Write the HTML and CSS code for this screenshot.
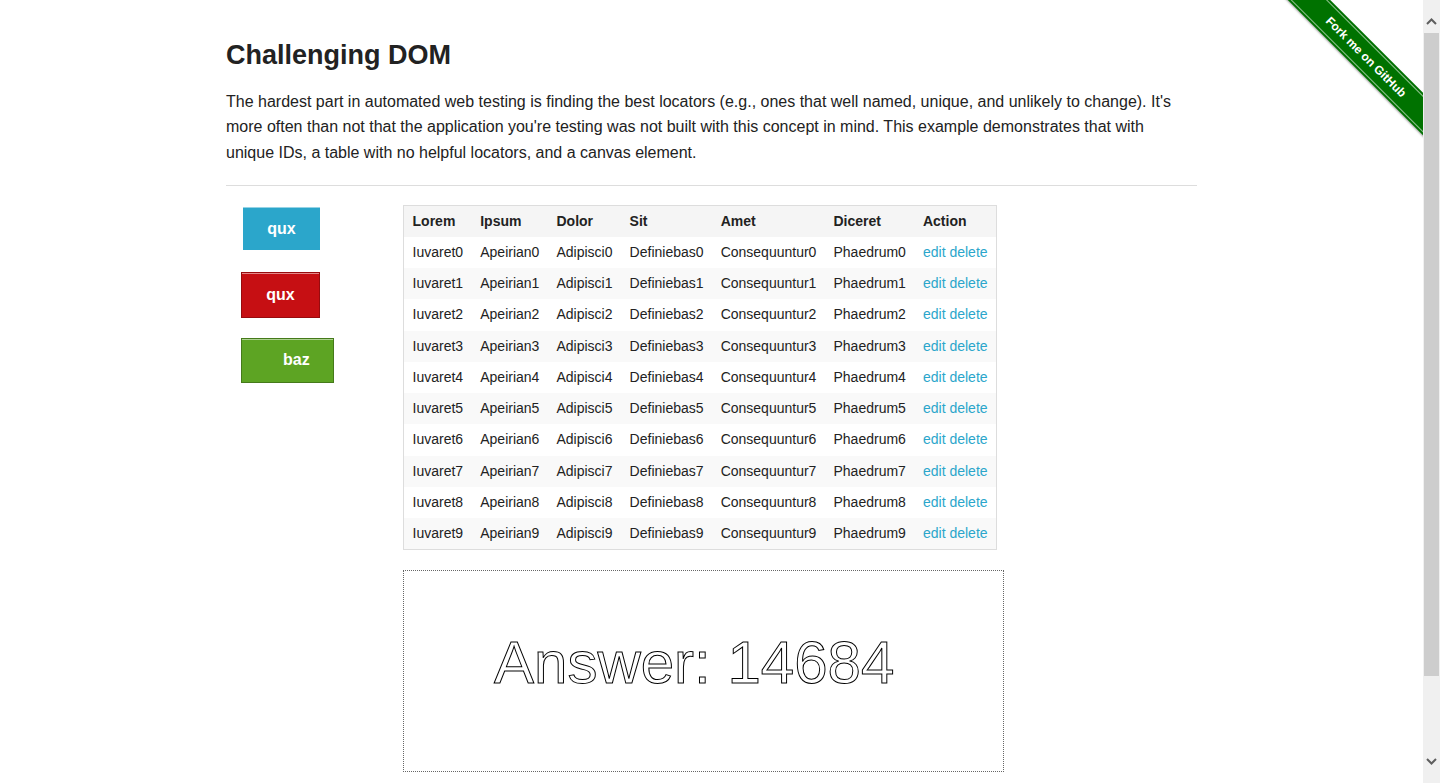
FILE: index.html
```html
<!DOCTYPE html>
<html lang="en">
<head>
<meta charset="utf-8">
<title>The Internet</title>
<link rel="stylesheet" href="styles.css">
</head>
<body>
<div class="fork">
  <a class="fork-band" href="#"><span>Fork me on GitHub</span></a>
</div>
<div class="scrollbar" aria-hidden="true">
  <svg class="sb-up" width="11" height="7" viewBox="0 0 11 7"><polyline points="1,6 5.5,1.5 10,6" fill="none" stroke="#5f5f5f" stroke-width="2"/></svg>
  <div class="sb-thumb"></div>
  <svg class="sb-down" width="11" height="7" viewBox="0 0 11 7"><polyline points="1,1 5.5,5.5 10,1" fill="none" stroke="#5f5f5f" stroke-width="2"/></svg>
</div>
<div class="page">
  <div class="example">
    <h3 class="title">Challenging DOM</h3>
    <p class="intro">The hardest part in automated web testing is finding the best locators (e.g., ones that well named, unique, and unlikely to change). It's more often than not that the application you're testing was not built with this concept in mind. This example demonstrates that with unique IDs, a table with no helpful locators, and a canvas element.</p>
    <hr class="rule">
    <div class="work">
      <div class="buttons">
        <a href="#" class="btn btn-blue">qux</a>
        <a href="#" class="btn btn-red">qux</a>
        <a href="#" class="btn btn-green">baz</a>
      </div>
      <div class="main">
        <table class="grid">
          <thead>
            <tr><th>Lorem</th><th>Ipsum</th><th>Dolor</th><th>Sit</th><th>Amet</th><th>Diceret</th><th>Action</th></tr>
          </thead>
          <tbody>
            <tr><td>Iuvaret0</td><td>Apeirian0</td><td>Adipisci0</td><td>Definiebas0</td><td>Consequuntur0</td><td>Phaedrum0</td><td><a href="#">edit</a> <a href="#">delete</a></td></tr>
            <tr><td>Iuvaret1</td><td>Apeirian1</td><td>Adipisci1</td><td>Definiebas1</td><td>Consequuntur1</td><td>Phaedrum1</td><td><a href="#">edit</a> <a href="#">delete</a></td></tr>
            <tr><td>Iuvaret2</td><td>Apeirian2</td><td>Adipisci2</td><td>Definiebas2</td><td>Consequuntur2</td><td>Phaedrum2</td><td><a href="#">edit</a> <a href="#">delete</a></td></tr>
            <tr><td>Iuvaret3</td><td>Apeirian3</td><td>Adipisci3</td><td>Definiebas3</td><td>Consequuntur3</td><td>Phaedrum3</td><td><a href="#">edit</a> <a href="#">delete</a></td></tr>
            <tr><td>Iuvaret4</td><td>Apeirian4</td><td>Adipisci4</td><td>Definiebas4</td><td>Consequuntur4</td><td>Phaedrum4</td><td><a href="#">edit</a> <a href="#">delete</a></td></tr>
            <tr><td>Iuvaret5</td><td>Apeirian5</td><td>Adipisci5</td><td>Definiebas5</td><td>Consequuntur5</td><td>Phaedrum5</td><td><a href="#">edit</a> <a href="#">delete</a></td></tr>
            <tr><td>Iuvaret6</td><td>Apeirian6</td><td>Adipisci6</td><td>Definiebas6</td><td>Consequuntur6</td><td>Phaedrum6</td><td><a href="#">edit</a> <a href="#">delete</a></td></tr>
            <tr><td>Iuvaret7</td><td>Apeirian7</td><td>Adipisci7</td><td>Definiebas7</td><td>Consequuntur7</td><td>Phaedrum7</td><td><a href="#">edit</a> <a href="#">delete</a></td></tr>
            <tr><td>Iuvaret8</td><td>Apeirian8</td><td>Adipisci8</td><td>Definiebas8</td><td>Consequuntur8</td><td>Phaedrum8</td><td><a href="#">edit</a> <a href="#">delete</a></td></tr>
            <tr><td>Iuvaret9</td><td>Apeirian9</td><td>Adipisci9</td><td>Definiebas9</td><td>Consequuntur9</td><td>Phaedrum9</td><td><a href="#">edit</a> <a href="#">delete</a></td></tr>
          </tbody>
        </table>
        <div class="canvas">
          <svg class="canvas-svg" width="599" height="200" viewBox="0 0 599 200">
            <text x="90" y="112" font-family="Liberation Sans, Arial, sans-serif" font-size="60" fill="none" stroke="#000" stroke-width="1">Answer: 14684</text>
          </svg>
        </div>
      </div>
    </div>
  </div>
</div>
</body>
</html>
```
FILE: styles.css
```css
body {
  margin: 0 17px 0 0;
  font-family: "Liberation Sans", Arial, Helvetica, sans-serif;
  color: #222;
  background: #fff;
}

a {
  color: #2ba6cb;
  text-decoration: none;
}

.page {
  width: 971px;
  margin: 0 auto;
  padding-top: 37px;
  padding-bottom: 120px;
}

.title {
  margin: 0 0 14px;
  font-size: 27px;
  line-height: 37.8px;
  font-weight: bold;
  color: #222;
}

.intro {
  margin: 0 0 19px;
  padding-right: 6px;
  font-size: 16px;
  line-height: 25.6px;
}

.rule {
  margin: 0;
  border: 0;
  border-top: 1px solid #ddd;
  height: 0;
}

.work {
  display: flex;
  align-items: flex-start;
  padding-top: 19px;
}

.buttons {
  width: 177px;
  flex: none;
  display: flex;
  flex-direction: column;
  align-items: flex-start;
  padding-top: 2px;
  padding-left: 15px;
  box-sizing: border-box;
}

.btn {
  display: block;
  box-sizing: border-box;
  color: #fff;
  font-size: 16px;
  font-weight: bold;
  text-align: center;
  line-height: 20px;
  box-shadow: inset 0 1px 0 rgba(255, 255, 255, 0.5);
}

.btn-blue {
  margin-left: 2px;
  width: 77px;
  height: 43px;
  padding-top: 12px;
  background: #2ba6cb;
}

.btn-red {
  margin-top: 22px;
  width: 79px;
  height: 46px;
  padding-top: 12px;
  background: #c60f13;
  border: 1px solid #970b0e;
}

.btn-green {
  margin-top: 20px;
  width: 93px;
  height: 45px;
  padding: 11px 24px 0 41px;
  text-align: left;
  background: #5da423;
  border: 1px solid #457a1a;
}

.main {
  flex: 1;
}

.grid {
  border-collapse: separate;
  border-spacing: 0;
  border: 1px solid #ddd;
  font-size: 14px;
  background: #fff;
}

.grid th,
.grid td {
  padding: 0 8.55px;
  text-align: left;
  white-space: nowrap;
  color: #222;
}

.grid th {
  background: #f5f5f5;
  font-weight: bold;
  height: 31.5px;
  line-height: 31px;
}

.grid td {
  height: 31.2px;
  line-height: 31.2px;
}

.grid td a {
  color: #2ba6cb;
}

.grid tbody tr:nth-child(even) td {
  background: #f9f9f9;
}

.canvas {
  margin-top: 20px;
  width: 599px;
  height: 200px;
  border: 1px dotted #666;
}

.canvas-svg {
  display: block;
}

.fork {
  position: absolute;
  top: 0;
  right: 17px;
  width: 149px;
  height: 149px;
  overflow: hidden;
  z-index: 10;
}

.fork-band {
  position: absolute;
  left: -18px;
  top: 42px;
  width: 220px;
  box-sizing: border-box;
  padding: 2px 0;
  background: #007200;
  transform: rotate(45deg);
  box-shadow: 0 1px 2px rgba(0, 0, 0, 0.35);
  text-align: center;
}

.fork-band span {
  display: block;
  border-top: 1px solid rgba(255, 255, 255, 0.55);
  border-bottom: 1px solid rgba(255, 255, 255, 0.55);
  color: #fff;
  font-size: 12px;
  font-weight: bold;
  line-height: 24px;
}

.scrollbar {
  position: fixed;
  top: 0;
  right: 0;
  width: 17px;
  height: 100vh;
  background: #f0f0f0;
  z-index: 20;
}

.sb-up {
  position: absolute;
  left: 3px;
  top: 18px;
}

.sb-thumb {
  position: absolute;
  left: 1px;
  top: 33px;
  width: 15px;
  height: 643px;
  background: #cdcdcd;
}

.sb-down {
  position: absolute;
  left: 3px;
  top: 758px;
}
```
